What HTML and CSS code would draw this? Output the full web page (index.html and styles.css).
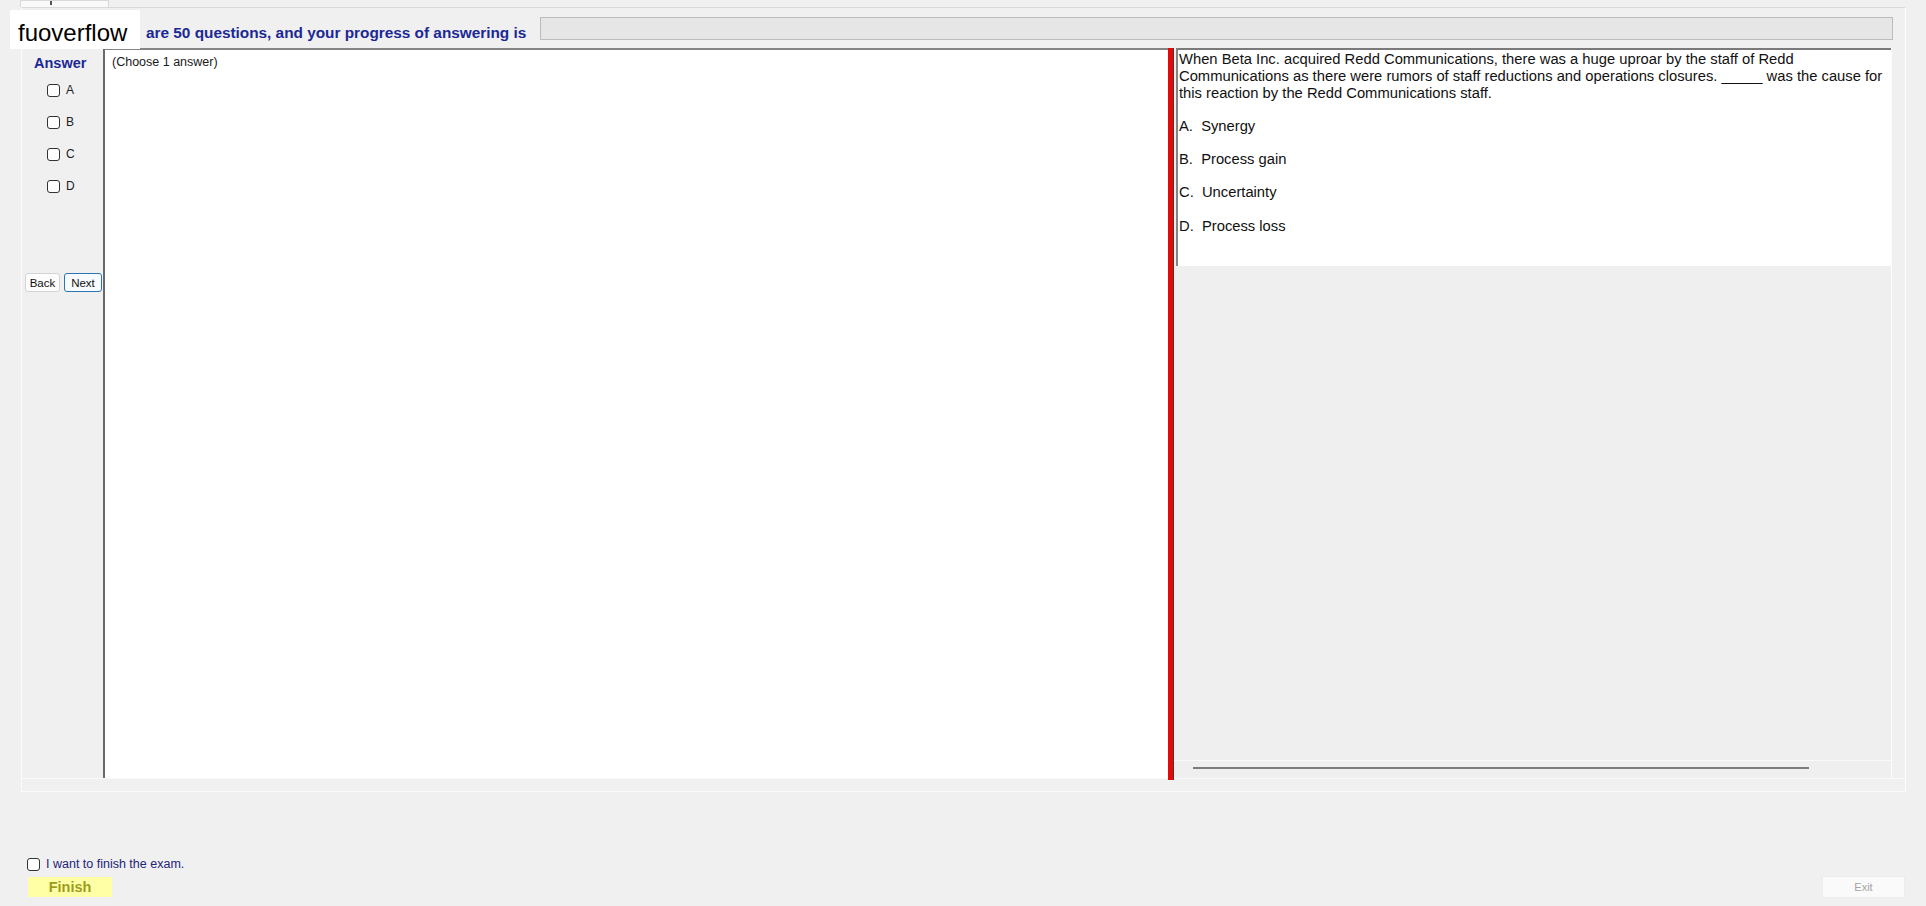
FILE: index.html
```html
<!DOCTYPE html>
<html lang="en">
<head>
<meta charset="utf-8">
<title>Exam</title>
<link rel="stylesheet" href="styles.css">
</head>
<body>
<div class="window">
  <div class="tabstrip">
    <div class="tab"><span class="tab-mark"></span></div>
  </div>

  <div class="tabpage">
    <div class="header">
      <div class="header-text">are 50 questions, and your progress of answering is</div>
      <div class="progress"></div>
    </div>

    <div class="main">
      <div class="answers">
        <div class="answers-title">Answer</div>
        <div class="opts">
          <label class="opt"><span class="box"></span>A</label>
          <label class="opt"><span class="box"></span>B</label>
          <label class="opt"><span class="box"></span>C</label>
          <label class="opt"><span class="box"></span>D</label>
        </div>
        <div class="nav">
          <button class="btn">Back</button>
          <button class="btn btn-focus">Next</button>
        </div>
      </div>

      <div class="workspace">(Choose 1 answer)</div>

      <div class="splitter"></div>

      <div class="question-pane">
        <div class="question">
          <p>When Beta Inc. acquired Redd Communications, there was a huge uproar by the staff of Redd Communications as there were rumors of staff reductions and operations closures. _____ was the cause for this reaction by the Redd Communications staff.</p>
          <p>A.&nbsp; Synergy</p>
          <p>B.&nbsp; Process gain</p>
          <p>C.&nbsp; Uncertainty</p>
          <p>D.&nbsp; Process loss</p>
        </div>
        <div class="hscroll"><div class="hscroll-thumb"></div></div>
      </div>
    </div>
  </div>

  <div class="footer">
    <div class="footer-left">
      <label class="finish-check"><span class="box"></span>I want to finish the exam.</label>
      <button class="finish">Finish</button>
    </div>
    <button class="exit">Exit</button>
  </div>

  <div class="brand">fuoverflow</div>
</div>
</body>
</html>
```

FILE: styles.css
```css
* { box-sizing: border-box; }

html, body {
  margin: 0;
  padding: 0;
}

body {
  background: #f0f0f0;
  font-family: "Liberation Sans", Arial, sans-serif;
  color: #000;
}

.window {
  position: relative;
  width: 1926px;
  height: 906px;
  overflow: hidden;
  display: flex;
  flex-direction: column;
}

/* tab header strip, mostly scrolled out of view */
.tabstrip {
  height: 7px;
  padding-left: 20px;
  flex: none;
}

.tab {
  width: 89px;
  height: 7px;
  background: #fafafa;
  border: 1px solid #d9d9d9;
  border-bottom: none;
  padding-left: 29px;
}

.tab-mark {
  display: block;
  width: 2px;
  height: 4px;
  background: #555;
}

.tabpage {
  flex: none;
  margin-left: 21px;
  width: 1885px;
  height: 785px;
  border: 1px solid #fbfbfb;
  border-top-color: #d9d9d9;
  display: flex;
  flex-direction: column;
}

/* title + progress */
.header {
  height: 40px;
  display: flex;
  align-items: flex-start;
  padding-left: 124px;
  padding-right: 12px;
  flex: none;
}

.header-text {
  flex: none;
  width: 394px;
  margin-top: 16px;
  font-size: 15.35px;
  line-height: 17px;
  font-weight: bold;
  color: #1b2896;
  white-space: nowrap;
}

.progress {
  flex: 1;
  margin-top: 9px;
  height: 23px;
  background: #e6e6e6;
  border: 1px solid #bcbcbc;
}

/* three panes */
.main {
  flex: none;
  height: 731px;
  display: flex;
  border-bottom: 1px solid #fafafa;
}

.answers {
  width: 81px;
  flex: none;
  display: flex;
  flex-direction: column;
  padding-top: 7px;
}

.answers-title {
  padding-left: 12px;
  font-size: 14.5px;
  line-height: 17px;
  font-weight: bold;
  color: #1b2896;
}

.opts {
  margin-top: 2px;
  display: flex;
  flex-direction: column;
}

.opt {
  height: 32px;
  display: flex;
  align-items: center;
  padding-left: 25px;
  gap: 6px;
  font-size: 12px;
  color: #222;
}

.box {
  display: inline-block;
  flex: none;
  width: 13px;
  height: 13px;
  border: 1px solid #333;
  border-radius: 3px;
  background: #fff;
}

.nav {
  margin-top: 71px;
  padding-left: 3px;
  display: flex;
  gap: 4px;
}

.btn {
  font-family: "Liberation Sans", Arial, sans-serif;
  font-size: 11.5px;
  color: #111;
  height: 19px;
  padding: 0;
  background: #fdfdfd;
  border: 1px solid #d3d3d3;
  border-radius: 3px;
  width: 35px;
}

.btn-focus {
  width: 38px;
  border-color: #2a74b8;
  background: #f7fbff;
}

.workspace {
  flex: none;
  width: 1065px;
  height: 730px;
  background: #fff;
  border-left: 2px solid #6a6a6a;
  border-top: 2px solid #858585;
  padding: 5px 7px;
  font-size: 12.5px;
  line-height: 15px;
  color: #1a1a1a;
}

.splitter {
  flex: none;
  width: 6px;
  height: 732px;
  background: #e40a0a;
  border-right: 1px solid #5a3030;
}

.question-pane {
  flex: none;
  width: 718px;
  height: 730px;
  display: flex;
  flex-direction: column;
  background: #efefef;
  border-right: 1px solid #fcfcfc;
}

.question {
  flex: none;
  height: 218px;
  margin-left: 2px;
  background: #fff;
  border-top: 2px solid #7a7a7a;
  border-left: 2px solid #858585;
  padding: 1px 4px 0 1px;
  font-size: 14.75px;
  line-height: 16.8px;
  color: #111;
}

.question p {
  margin: 0 0 16.5px;
}

.hscroll {
  margin-top: auto;
  height: 18px;
  border-top: 1px solid #fafafa;
  padding-top: 6px;
  padding-left: 19px;
}

.hscroll-thumb {
  width: 616px;
  height: 2px;
  background: #7c7c7c;
}

/* bottom bar */
.footer {
  flex: 1;
  display: flex;
  justify-content: space-between;
  padding-left: 27px;
  padding-right: 21px;
}

.footer-left {
  display: flex;
  flex-direction: column;
  align-items: flex-start;
  padding-top: 65px;
}

.finish-check {
  display: flex;
  align-items: center;
  gap: 6px;
  height: 14px;
  font-size: 12.5px;
  color: #25237a;
}

.finish {
  margin-top: 6px;
  margin-left: 1px;
  width: 84px;
  height: 20px;
  padding: 0;
  border: none;
  background: #ffffa6;
  font-family: "Liberation Sans", Arial, sans-serif;
  font-size: 14.5px;
  font-weight: bold;
  color: #9c9c1c;
}

.exit {
  align-self: flex-end;
  margin-bottom: 8px;
  width: 83px;
  height: 22px;
  padding: 0;
  background: #fafafa;
  border: 1px solid #ececec;
  font-family: "Liberation Sans", Arial, sans-serif;
  font-size: 11px;
  color: #a3a3a3;
}

/* site mark floating over the top-left corner */
.brand {
  position: absolute;
  left: 10px;
  top: 10px;
  width: 130px;
  height: 39px;
  background: #fff;
  padding: 9px 0 0 8px;
  font-size: 24px;
  line-height: 28px;
  color: #000;
}
```
